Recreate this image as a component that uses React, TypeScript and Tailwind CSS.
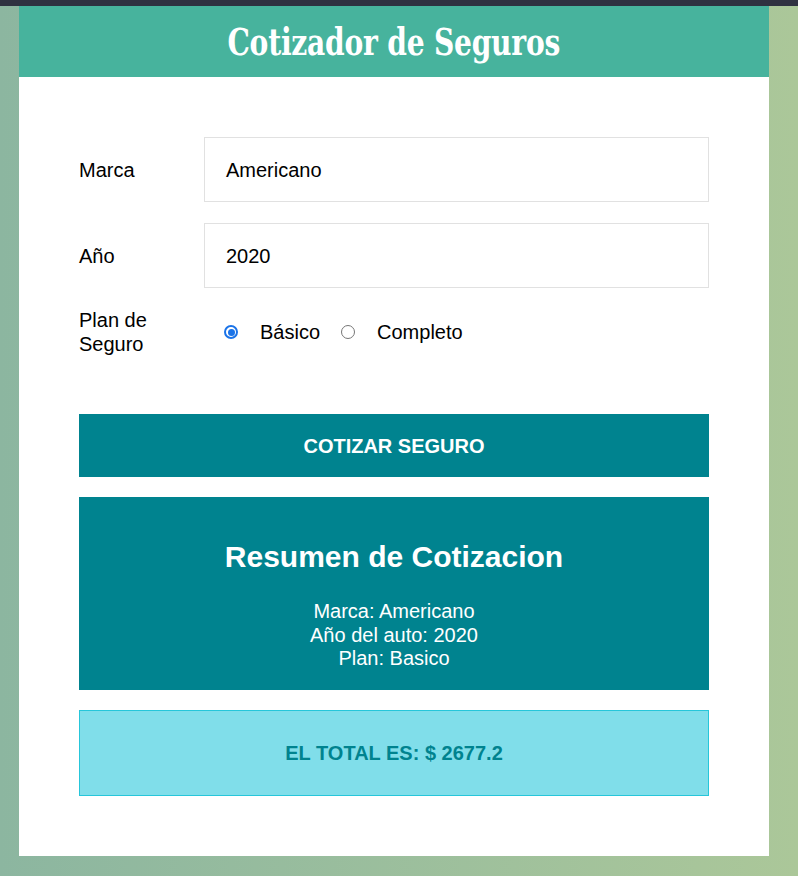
import React from "react";

export default function App() {
  const arial = { fontFamily: '"Liberation Sans", Arial, sans-serif' };
  return (
    <div className="min-h-[876px] w-full bg-gradient-to-r from-[#8cb6a0] to-[#abc799]" style={arial}>
      <div className="h-[6px] w-full bg-[#2f3241]" />
      <div className="ml-[19px] w-[750px]">
        <header className="flex h-[71px] items-center justify-center bg-[#47b39d]">
          <h1
            className="scale-x-[0.74] text-[38px] font-bold leading-none tracking-[-0.3px] text-white"
            style={{ fontFamily: '"DejaVu Serif", serif' }}
          >
            Cotizador de Seguros
          </h1>
        </header>
        <div className="h-[779px] bg-white px-[60px] pt-[60px]">
          <form className="flex flex-col">
            <div className="flex items-center">
              <label className="mr-[25px] w-[100px] text-[20px] text-black">Marca</label>
              <div className="flex h-[65px] flex-1 items-center border border-[#e1e1e1] pl-[21px] text-[20px] text-black">
                Americano
              </div>
            </div>
            <div className="mt-[21px] flex items-center">
              <label className="mr-[25px] w-[100px] text-[20px] text-black">Año</label>
              <div className="flex h-[65px] flex-1 items-center border border-[#e1e1e1] pl-[21px] text-[20px] text-black">
                2020
              </div>
            </div>
            <div className="mt-[20px] flex items-center">
              <label className="mr-[25px] w-[100px] text-[20px] leading-[24px] text-black">Plan de Seguro</label>
              <div className="flex items-center pl-[20px] text-[20px] text-black">
                <span className="flex h-[14px] w-[14px] items-center justify-center rounded-full border-2 border-[#1a73e8] bg-white">
                  <span className="h-[7px] w-[7px] rounded-full bg-[#1a73e8]" />
                </span>
                <span className="ml-[22px]">Básico</span>
                <span className="ml-[21px] h-[14px] w-[14px] rounded-full border border-[#767676] bg-white" />
                <span className="ml-[22px]">Completo</span>
              </div>
            </div>
            <button
              type="button"
              className="mt-[58px] flex h-[63px] w-full items-center justify-center bg-[#00838f] text-[20px] font-bold uppercase text-white"
            >
              Cotizar Seguro
            </button>
          </form>
          <div className="mt-[20px] flex h-[193px] flex-col items-center bg-[#00838f] pt-[43px] text-white">
            <h2 className="text-[30px] font-bold leading-[34px]">Resumen de Cotizacion</h2>
            <div className="mt-[26px] flex flex-col items-center text-[20px] leading-[23.5px]">
              <p>Marca: Americano</p>
              <p>Año del auto: 2020</p>
              <p>Plan: Basico</p>
            </div>
          </div>
          <div className="mt-[20px] flex h-[86px] items-center justify-center border border-[#26c6da] bg-[#80deea]">
            <p className="text-[20px] font-bold uppercase text-[#00838f]">El total es: $ 2677.2</p>
          </div>
        </div>
      </div>
    </div>
  );
}
